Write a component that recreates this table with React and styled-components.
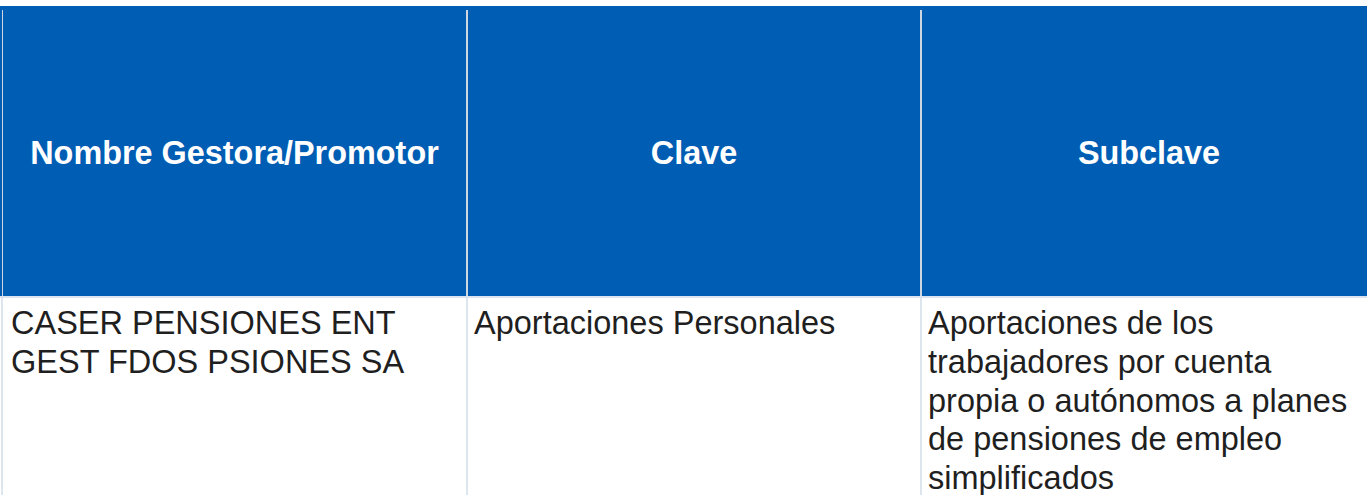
import React from 'react'
import styled, { createGlobalStyle } from 'styled-components'

const GlobalStyle = createGlobalStyle`
  html, body {
    margin: 0;
    padding: 0;
    background: #ffffff;
    overflow: hidden;
  }
  body {
    font-family: 'Liberation Sans', Arial, sans-serif;
  }
`

const Table = styled.div`
  margin-top: 6px;
  width: 1376px;
`

const HeadRow = styled.div`
  display: grid;
  grid-template-columns: 466px 454px 456px;
  height: 292px;
  padding-top: 4px;
  box-sizing: border-box;
  background: #005db4;
  border-bottom: 2px solid #dce5ef;
`

const HeadCell = styled.div`
  display: flex;
  align-items: center;
  justify-content: center;
  border-left: ${(p) => (p.first ? '1px' : '2px')} solid #cdd7e2;
  margin-left: ${(p) => (p.first ? '2px' : '0')};
  color: #ffffff;
  font-weight: bold;
  font-size: 32.4px;
  line-height: 38px;
  text-align: center;
`

const BodyRow = styled.div`
  display: grid;
  grid-template-columns: 466px 454px 456px;
`

const Cell = styled.div`
  border-left: 2px solid #dde5ef;
  margin-left: ${(p) => (p.first ? '1px' : '0')};
  padding: 6px 10px 20px ${(p) => (p.first ? '8px' : '6px')};
  color: #1f1f1f;
  font-size: 32.5px;
  line-height: 38.8px;
`

const columns = ['Nombre Gestora/Promotor', 'Clave', 'Subclave']

const rows = [
  [
    'CASER PENSIONES ENT GEST FDOS PSIONES SA',
    'Aportaciones Personales',
    'Aportaciones de los trabajadores por cuenta propia o autónomos a planes de pensiones de empleo simplificados',
  ],
]

export default function App() {
  return (
    <>
      <GlobalStyle />
      <Table>
        <HeadRow>
          {columns.map((c, i) => (
            <HeadCell key={c} first={i === 0}>
              {c}
            </HeadCell>
          ))}
        </HeadRow>
        {rows.map((r, ri) => (
          <BodyRow key={ri}>
            {r.map((v, i) => (
              <Cell key={i} first={i === 0}>
                {v}
              </Cell>
            ))}
          </BodyRow>
        ))}
      </Table>
    </>
  )
}
